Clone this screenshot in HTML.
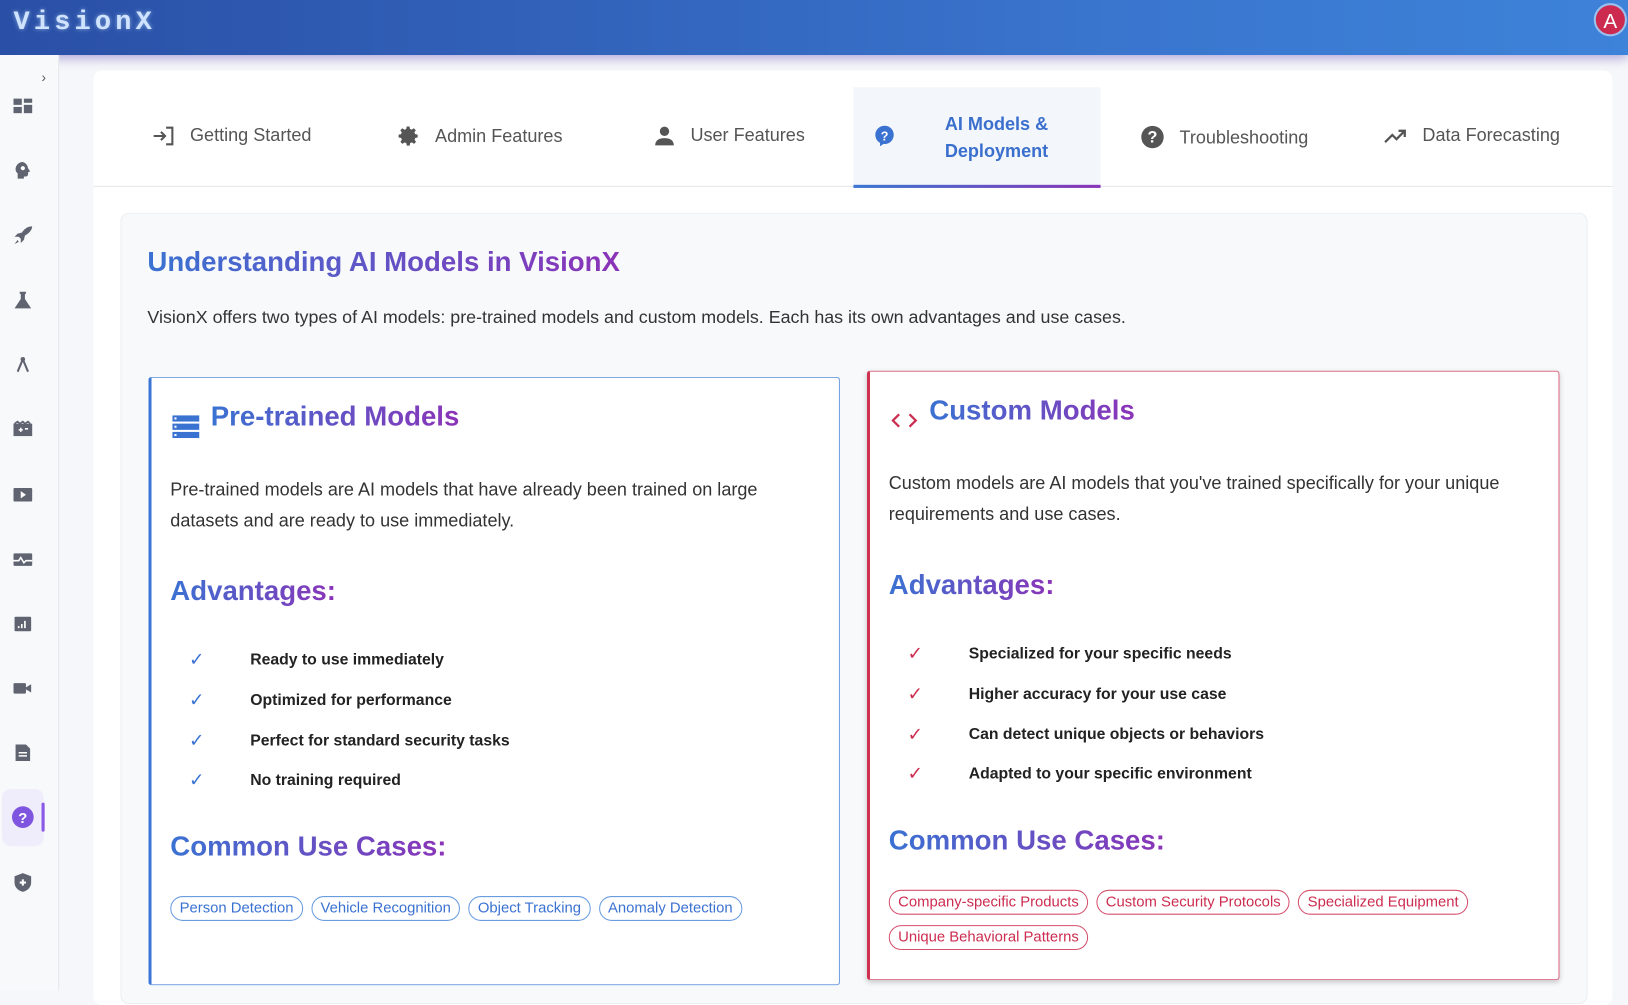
<!DOCTYPE html>
<html><head><meta charset="utf-8"><style>
html,body{margin:0;padding:0;width:1628px;height:990px;overflow:hidden;background:#f6f7fa;font-family:"Liberation Sans",sans-serif}
#w{position:absolute;left:0;top:0;width:1568px;height:954px;transform:scale(1.03827);transform-origin:0 0;background:#f6f7fa}
.hdr{position:absolute;left:0;top:0;width:1568px;height:53px;background:linear-gradient(90deg,#2a4fa6,#3a76cf 70%,#3d83d9);box-shadow:0 4px 10px rgba(110,90,190,.5)}
.logo{position:absolute;left:13px;top:6px;font-family:"Liberation Mono",monospace;font-weight:bold;font-size:26px;color:#cfe3ff;letter-spacing:4px;text-shadow:0 0 4px rgba(200,230,255,.6)}
.av{position:absolute;left:1535px;top:3px;width:32px;height:32px;border-radius:50%;background:#cc2a4f;border:2px solid #9cc0ee;color:#fff;font-size:20px;text-align:center;line-height:32px;box-sizing:border-box}
.side{position:absolute;left:0;top:53px;width:56px;height:901px;background:#f8f9fb;border-right:1px solid #e6e7eb}
.si{position:absolute;left:12px;width:20px;height:20px}
.panel{position:absolute;left:90px;top:68px;width:1463px;height:900px;background:#fff;border-radius:8px}
.tabs{position:absolute;left:0;top:0;width:1463px;height:111px;border-bottom:1px solid #e4e6ea}
.tab{position:absolute;top:52px;font-size:17.4px;color:#555;display:flex;align-items:center}
.tab svg{margin-right:14px}
.act{position:absolute;left:732px;top:16px;width:238px;height:95px;background:#f3f7fb}
.act .bar{position:absolute;left:0;bottom:-2px;width:238px;height:3px;background:linear-gradient(90deg,#3a76d2,#8a35b8)}
.sec{position:absolute;left:116px;top:205px;width:1411px;height:760px;background:#f8f9fb;border:1px solid #eceef2;border-radius:8px}
.g{background:linear-gradient(90deg,#3a72d2,#8b33b8);-webkit-background-clip:text;background-clip:text;color:transparent;display:inline-block;font-weight:bold}
.h1{position:absolute;left:142px;top:237px;font-size:26.6px}
.p0{position:absolute;left:142px;top:295px;font-size:17.2px;color:#333}
.card{position:absolute;background:#fff;box-sizing:border-box}
.c1{left:143px;top:363px;width:666px;height:586px;border:1px solid #6e9de2;border-left:3px solid #3b76d6;border-radius:3px}
.c2{left:835px;top:357px;width:667px;height:587px;border:1px solid #dc6a84;border-left:3px solid #d0304f;border-radius:3px;box-shadow:0 2px 5px rgba(0,0,0,.2)}
.ct{position:absolute;left:57px;top:22px;font-size:26.6px}
.ci{position:absolute;left:20px;top:36px}
.cp{position:absolute;left:18px;top:92px;width:630px;font-size:17.4px;line-height:30px;color:#333}
.ad{position:absolute;left:18px;top:190px;font-size:26.6px}
.li{position:absolute;left:95px;font-size:15.2px;font-weight:bold;color:#222}
.ck{position:absolute;left:36px;font-size:18px}
.cu{position:absolute;left:18px;top:436px;font-size:26.6px}
.chips{position:absolute;left:18px;top:499px;width:630px}
.chip{display:inline-block;font-size:14.3px;padding:3px 8px;border-radius:13px;margin:0 8px 10px 0;line-height:16px}
.c1 .chip{border:1px solid #6a9ce0;color:#3a72d2}
.c2 .chip{border:1px solid #d6506e;color:#cc2d50}
</style></head><body><div id="w">
<div class="hdr"><div class="logo">VisionX</div><div class="av">A</div></div>
<div class="side">
<div style="position:absolute;left:40px;top:14px;color:#555;font-size:13px">&#8250;</div>
<svg class="si" style="top:39px" viewBox="0 0 20 20"><rect x="1" y="3" width="8" height="6" fill="#5f6470"/><rect x="11" y="3" width="8" height="4" fill="#5f6470"/><rect x="1" y="11" width="8" height="6" fill="#5f6470"/><rect x="11" y="9" width="8" height="8" fill="#5f6470"/></svg>
<svg class="si" style="top:101px" viewBox="0 0 20 20"><path d="M10 2a7 7 0 0 0-7 7c0 2 1 3 2 4v5h6v-2h2a2 2 0 0 0 2-2v-2l2-1-2-3a7 7 0 0 0-5-6z" fill="#5f6470"/><circle cx="10" cy="8" r="2" fill="#fff"/></svg>
<svg class="si" style="top:164px" viewBox="0 0 20 20"><path d="M19 1c-5 0-8 3-10 6l-4 1-3 3 4 0 2 2 0 4 3-3 1-4c3-2 7-5 7-9z M5 14l-3 4 4-2z" fill="#5f6470"/></svg>
<svg class="si" style="top:226px" viewBox="0 0 20 20"><path d="M7 2h6v2h-1v5l6 9H2l6-9V4H7z" fill="#5f6470"/></svg>
<svg class="si" style="top:288px" viewBox="0 0 20 20"><path d="M10 5l-5 12M10 5l5 12" stroke="#5f6470" stroke-width="2" fill="none"/><circle cx="10" cy="5" r="2.2" fill="#5f6470"/></svg>
<svg class="si" style="top:350px" viewBox="0 0 20 20"><rect x="1" y="5" width="18" height="12" fill="#5f6470"/><path d="M2 5l3-2 2 2 3-2 2 2 3-2 2 2" stroke="#5f6470" stroke-width="1.5" fill="none"/><path d="M6 11h4M8 9v4M12 10h3" stroke="#fff" stroke-width="1.5"/></svg>
<svg class="si" style="top:413px" viewBox="0 0 20 20"><rect x="1" y="4" width="18" height="13" rx="1" fill="#5f6470"/><path d="M8 7l5 3.5-5 3.5z" fill="#fff"/></svg>
<svg class="si" style="top:476px" viewBox="0 0 20 20"><rect x="1" y="4" width="18" height="12" rx="1" fill="#5f6470"/><path d="M1 11h5l2-3 3 5 2-2h6" stroke="#fff" stroke-width="1.5" fill="none"/></svg>
<svg class="si" style="top:538px" viewBox="0 0 20 20"><rect x="2" y="3" width="16" height="14" rx="1" fill="#5f6470"/><path d="M6 14v-2M9 14v-4M12 14V7" stroke="#fff" stroke-width="1.6"/></svg>
<svg class="si" style="top:600px" viewBox="0 0 20 20"><rect x="1" y="5" width="12" height="10" rx="1" fill="#5f6470"/><path d="M13 9l5-3v8l-5-3z" fill="#5f6470"/></svg>
<svg class="si" style="top:662px" viewBox="0 0 20 20"><path d="M3 2h10l4 4v12H3z" fill="#5f6470"/><path d="M6 10h8M6 13h8" stroke="#fff" stroke-width="1.5"/></svg>
<div style="position:absolute;left:2px;top:707px;width:40px;height:55px;background:#efecfb;border-radius:8px"></div>
<div style="position:absolute;left:40px;top:720px;width:3px;height:28px;background:#8a5ae6;border-radius:2px"></div>
<svg class="si" style="top:723px;width:22px;height:22px;left:11px" viewBox="0 0 20 20"><circle cx="10" cy="10" r="9.5" fill="#7f55e0"/><text x="10" y="15" font-size="13" font-weight="bold" fill="#fff" text-anchor="middle" font-family="Liberation Sans">?</text></svg>
<svg class="si" style="top:787px" viewBox="0 0 20 20"><path d="M10 1l8 3v6c0 5-4 8-8 9-4-1-8-4-8-9V4z" fill="#5f6470"/><path d="M10 7v6M7 10h6" stroke="#fff" stroke-width="2"/></svg>
</div>
<div class="panel">
<div class="tabs">
<div class="act"><div class="bar"></div></div>
<div class="tab" style="left:57px"><svg width="22" height="20" viewBox="0 0 22 20"><path d="M1 10h11M8 6l4 4-4 4M13 2h6v16h-6" stroke="#555" stroke-width="2" fill="none"/></svg>Getting Started</div>
<div class="tab" style="left:293px"><svg width="22" height="22" viewBox="0 0 24 24"><path d="M12 8a4 4 0 1 0 0 8 4 4 0 0 0 0-8zm9 5.5v-3l-2.6-.5-.8-1.9 1.5-2.2-2.1-2.1-2.2 1.5-1.9-.8L12.5 2h-3l-.5 2.6-1.9.8-2.2-1.5-2.1 2.1 1.5 2.2-.8 1.9L1 10.5v3l2.6.5.8 1.9-1.5 2.2 2.1 2.1 2.2-1.5 1.9.8.5 2.6h3l.5-2.6 1.9-.8 2.2 1.5 2.1-2.1-1.5-2.2.8-1.9z" fill="#555"/></svg>Admin Features</div>
<div class="tab" style="left:539px"><svg width="22" height="20" viewBox="0 0 20 20"><circle cx="10" cy="5.5" r="4.5" fill="#555"/><path d="M1 19c0-5 4-7 9-7s9 2 9 7z" fill="#555"/></svg>User Features</div>
<div class="tab" style="left:751px"><svg width="22" height="22" viewBox="0 0 20 20"><path d="M10 1a8 8 0 0 0-4 15v3l3-2h1a8 8 0 0 0 0-16z" fill="#3a72d2"/><text x="10" y="14" font-size="11" font-weight="bold" fill="#fff" text-anchor="middle" font-family="Liberation Sans">?</text></svg></div>
<div style="position:absolute;left:820px;top:38px;font-size:17.4px;line-height:26px;color:#3a6fce;font-weight:bold;text-align:center">AI Models &amp;<br>Deployment</div>
<div class="tab" style="left:1008px"><svg width="24" height="24" viewBox="0 0 20 20"><circle cx="10" cy="10" r="9" fill="#555"/><text x="10" y="14.5" font-size="13" font-weight="bold" fill="#fff" text-anchor="middle" font-family="Liberation Sans">?</text></svg>Troubleshooting</div>
<div class="tab" style="left:1242px"><svg width="24" height="20" viewBox="0 0 24 20"><path d="M2 16l7-7 4 4 8-8M15 5h6v6" stroke="#555" stroke-width="2.2" fill="none"/></svg>Data Forecasting</div>
</div>
</div>
<div class="sec"></div>
<div class="h1 g">Understanding AI Models in VisionX</div>
<div class="p0">VisionX offers two types of AI models: pre-trained models and custom models. Each has its own advantages and use cases.</div>

<div class="card c1">
<svg class="ci" width="26" height="22" viewBox="0 0 26 22"><rect x="0" y="0" width="26" height="6" fill="#3a72d2"/><rect x="0" y="8" width="26" height="6" fill="#3a72d2"/><rect x="0" y="16" width="26" height="6" fill="#3a72d2"/><rect x="2" y="2" width="2" height="2" fill="#fff"/><rect x="2" y="10" width="2" height="2" fill="#fff"/><rect x="2" y="18" width="2" height="2" fill="#fff"/></svg>
<div class="ct g">Pre-trained Models</div>
<div class="cp">Pre-trained models are AI models that have already been trained on large datasets and are ready to use immediately.</div>
<div class="ad g">Advantages:</div>
<div class="ck" style="top:261px;color:#3a72d2">&#10003;</div><div class="li" style="top:263px">Ready to use immediately</div>
<div class="ck" style="top:300px;color:#3a72d2">&#10003;</div><div class="li" style="top:302px">Optimized for performance</div>
<div class="ck" style="top:339px;color:#3a72d2">&#10003;</div><div class="li" style="top:341px">Perfect for standard security tasks</div>
<div class="ck" style="top:377px;color:#3a72d2">&#10003;</div><div class="li" style="top:379px">No training required</div>
<div class="cu g">Common Use Cases:</div>
<div class="chips"><span class="chip">Person Detection</span><span class="chip">Vehicle Recognition</span><span class="chip">Object Tracking</span><span class="chip">Anomaly Detection</span></div>
</div>

<div class="card c2">
<svg class="ci" width="26" height="18" viewBox="0 0 26 18" style="top:38px"><path d="M8 3l-6 6 6 6M18 3l6 6-6 6" stroke="#cc2d50" stroke-width="2.2" fill="none"/></svg>
<div class="ct g">Custom Models</div>
<div class="cp">Custom models are AI models that you've trained specifically for your unique requirements and use cases.</div>
<div class="ad g">Advantages:</div>
<div class="ck" style="top:261px;color:#cc2d50">&#10003;</div><div class="li" style="top:263px">Specialized for your specific needs</div>
<div class="ck" style="top:300px;color:#cc2d50">&#10003;</div><div class="li" style="top:302px">Higher accuracy for your use case</div>
<div class="ck" style="top:339px;color:#cc2d50">&#10003;</div><div class="li" style="top:341px">Can detect unique objects or behaviors</div>
<div class="ck" style="top:377px;color:#cc2d50">&#10003;</div><div class="li" style="top:379px">Adapted to your specific environment</div>
<div class="cu g">Common Use Cases:</div>
<div class="chips"><span class="chip">Company-specific Products</span><span class="chip">Custom Security Protocols</span><span class="chip">Specialized Equipment</span><span class="chip">Unique Behavioral Patterns</span></div>
</div>
</div></body></html>
